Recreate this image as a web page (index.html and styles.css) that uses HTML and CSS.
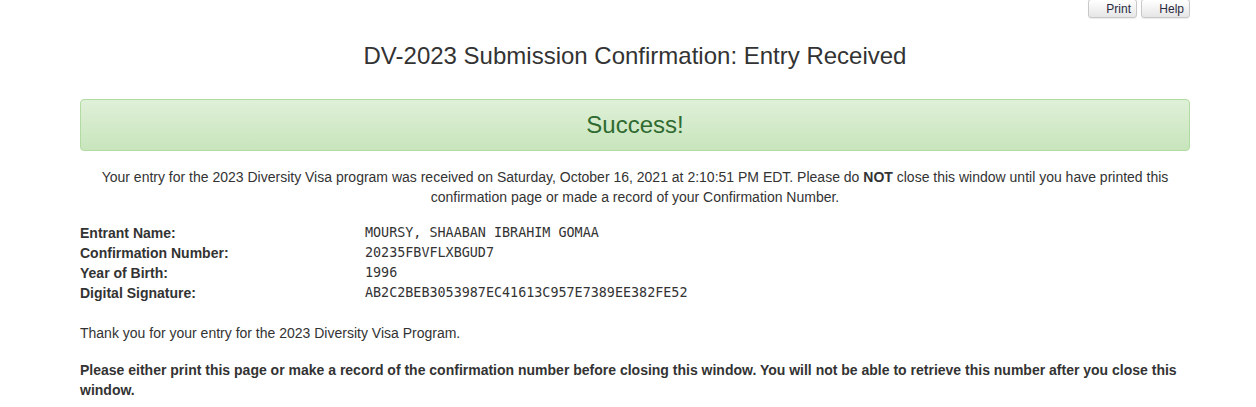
FILE: index.html
```html
<!DOCTYPE html>
<html>
<head>
<meta charset="utf-8">
<link rel="stylesheet" href="styles.css">
</head>
<body>
<div class="toolbar">
  <button class="tbtn">Print</button>
  <button class="tbtn">Help</button>
</div>
<div class="container">
  <h1 class="title">DV-2023 Submission Confirmation: Entry Received</h1>
  <div class="alert">Success!</div>
  <p class="intro">Your entry for the 2023 Diversity Visa program was received on Saturday, October 16, 2021 at 2:10:51 PM EDT. Please do <b>NOT</b> close this window until you have printed this confirmation page or made a record of your Confirmation Number.</p>
  <div class="details">
    <div class="label">Entrant Name:</div><div class="value">MOURSY, SHAABAN IBRAHIM GOMAA</div>
    <div class="label">Confirmation Number:</div><div class="value">20235FBVFLXBGUD7</div>
    <div class="label">Year of Birth:</div><div class="value">1996</div>
    <div class="label">Digital Signature:</div><div class="value">AB2C2BEB3053987EC41613C957E7389EE382FE52</div>
  </div>
  <p class="thanks">Thank you for your entry for the 2023 Diversity Visa Program.</p>
  <p class="warn">Please either print this page or make a record of the confirmation number before closing this window. You will not be able to retrieve this number after you close this window.</p>
</div>
</body>
</html>
```
FILE: styles.css
```css
html, body {
  margin: 0;
  padding: 0;
  background: #fff;
}
body {
  font-family: "Liberation Sans", Arial, sans-serif;
  font-size: 14px;
  line-height: 20px;
  color: #333;
}
.toolbar {
  display: flex;
  justify-content: flex-end;
  gap: 4px;
  padding-right: 66px;
  height: 19px;
}
.tbtn {
  width: 49px;
  height: 19px;
  margin-top: -1px;
  padding: 0 5px 0 0;
  text-align: right;
  font-family: "Liberation Sans", Arial, sans-serif;
  font-size: 12px;
  color: #2a2a40;
  background: linear-gradient(#ffffff, #e6e6e6);
  border: 1px solid #c8c8c8;
  border-radius: 3px;
  box-shadow: 0 1px 1px rgba(0,0,0,0.08);
}
.container {
  width: 1110px;
  margin-left: 80px;
}
.title {
  margin: 24px 0 0;
  font-weight: normal;
  font-size: 24px;
  line-height: 26px;
  text-align: center;
  color: #333;
}
.alert {
  margin-top: 30px;
  height: 50px;
  border: 1px solid #b2dba1;
  border-radius: 4px;
  background: linear-gradient(#dff0d8, #c8e5bc);
  color: #2f6a30;
  font-size: 24px;
  line-height: 50px;
  text-align: center;
}
.intro {
  margin: 16px 20px 0;
  text-align: center;
}
.details {
  display: grid;
  grid-template-columns: 285px 1fr;
  margin-top: 16px;
}
.label {
  font-weight: bold;
}
.value {
  font-family: "DejaVu Sans Mono", monospace;
  font-size: 13.4px;
}
.thanks {
  margin: 20px 0 0;
}
.warn {
  margin: 17px 0 0;
  font-weight: bold;
}
```
